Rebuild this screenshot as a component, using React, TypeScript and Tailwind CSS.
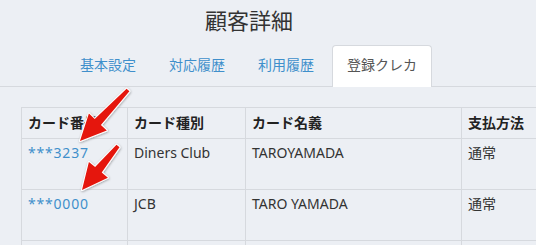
const tabs = ["基本設定", "対応履歴", "利用履歴", "登録クレカ"];

const rows = [
  { no: "***3237", brand: "Diners Club", holder: "TAROYAMADA", pay: "通常" },
  { no: "***0000", brand: "JCB", holder: "TARO YAMADA", pay: "通常" },
];

// 注釈の赤矢印（スクショ上の書き込み）
function Arrows() {
  return (
    <svg className="pointer-events-none absolute left-0 top-0" width="536" height="245" viewBox="0 0 536 245">
      <defs>
        <filter id="sh" x="-20%" y="-20%" width="140%" height="140%">
          <feDropShadow dx="0.5" dy="0.8" stdDeviation="0.8" floodColor="#000" floodOpacity="0.35" />
        </filter>
      </defs>
      <g fill="#e5150c" stroke="#fff" strokeWidth="2" strokeLinejoin="round" paintOrder="stroke" filter="url(#sh)">
        <polygon points="129.4,91.3 100.9,125 106.8,130.5 80,141 88.9,113.5 94.7,119 126.6,88.7" />
        <polygon points="119.5,147.3 101.7,172.6 107.9,177.7 82,190 88.9,161.9 95.1,167 116.5,144.7" />
      </g>
    </svg>
  );
}

export default function App() {
  return (
    <div
      className="relative h-[245px] w-[536px] overflow-hidden bg-[#eceff4] text-[#333]"
      style={{ fontFamily: '"Noto Sans", "Noto Sans CJK JP", sans-serif' }}
    >
      <div className="w-[498px] pt-[6px] text-center text-[22px] leading-[28px] text-[#333]">顧客詳細</div>

      <div className="mt-[11px] border-b border-[#d6d9de]">
        <div className="flex w-[497px] justify-center gap-[3px]">
          {tabs.map((t, i) =>
            i === tabs.length - 1 ? (
              <div
                key={t}
                className="-mb-px rounded-t-[4px] border border-b-0 border-[#d6d9de] bg-white px-[14px] pb-[11px] pt-[9px] text-[14px] leading-[20px] text-[#555]"
              >
                {t}
              </div>
            ) : (
              <div key={t} className="border border-transparent px-[14px] pb-[10px] pt-[9px] text-[14px] leading-[20px] text-[#3f8fcb]">
                {t}
              </div>
            )
          )}
        </div>
      </div>

      <table className="ml-[21px] mt-[20px] w-[600px] table-fixed border-collapse text-[14px] leading-[20px]">
        <colgroup>
          <col className="w-[106px]" />
          <col className="w-[118px]" />
          <col className="w-[216px]" />
          <col />
        </colgroup>
        <thead>
          <tr className="h-[31px]">
            {["カード番号", "カード種別", "カード名義", "支払方法"].map((h) => (
              <th key={h} className="border border-[#d6d9de] px-[6px] text-left align-middle font-bold text-[#222]">
                {h}
              </th>
            ))}
          </tr>
        </thead>
        <tbody>
          {rows.map((r) => (
            <tr key={r.no} className="h-[51px]">
              <td className="border border-[#d6d9de] px-[6px] pt-[4px] align-top tracking-[0.8px] text-[#3f8fcb]">{r.no}</td>
              <td className="border border-[#d6d9de] px-[6px] pt-[4px] align-top">{r.brand}</td>
              <td className="border border-[#d6d9de] px-[6px] pt-[4px] align-top">{r.holder}</td>
              <td className="border border-[#d6d9de] px-[6px] pt-[4px] align-top">{r.pay}</td>
            </tr>
          ))}
          <tr className="h-[51px]">
            <td className="border border-[#d6d9de]" />
            <td className="border border-[#d6d9de]" />
            <td className="border border-[#d6d9de]" />
            <td className="border border-[#d6d9de]" />
          </tr>
        </tbody>
      </table>

      <Arrows />
    </div>
  );
}
